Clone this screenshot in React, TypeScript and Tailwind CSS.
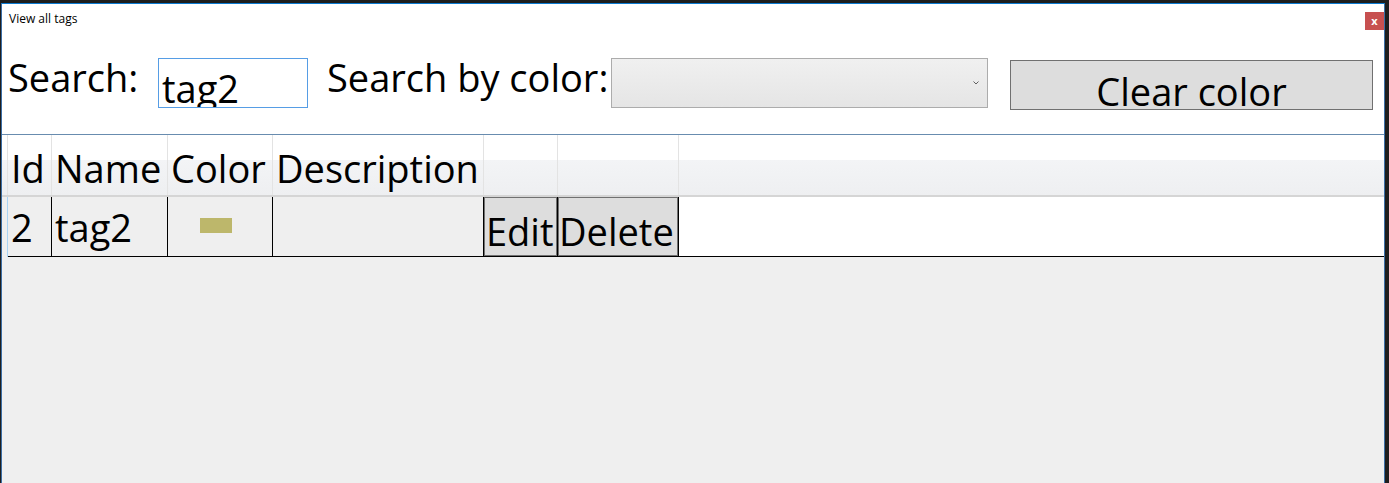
export default function App() {
  return (
    <div className="w-[1389px] h-[483px] bg-[#1e1e1e] pt-[3px] pl-[1px] overflow-hidden font-['Open_Sans',sans-serif] text-black">
      <div className="w-[1384px] h-[480px] bg-white border-t border-t-[#0b7ad1] border-x border-x-[#3b6ea5] flex flex-col">
        {/* title bar */}
        <div className="relative h-[30px] flex items-center pl-[7px] text-[12px]">
          View all tags
          <button className="absolute right-0 top-[8px] w-[19px] h-[18px] bg-[#c75050] text-white text-[11px] font-bold leading-none flex items-center justify-center pb-[2px]">
            x
          </button>
        </div>

        {/* search bar */}
        <div className="h-[100px] flex items-start text-[38px] leading-[40px]">
          <div className="ml-[6px] w-[150px] mt-[23px] whitespace-nowrap">Search:</div>
          <div className="w-[150px] h-[50px] mt-[24px] border border-[#569de5] overflow-hidden pl-[3px] pt-[9px] whitespace-nowrap">
            tag2
          </div>
          <div className="ml-[19px] w-[284px] mt-[23px] whitespace-nowrap">Search by color:</div>
          <div className="w-[377px] h-[50px] mt-[24px] border border-[#acacac] bg-gradient-to-b from-[#f0f0f0] to-[#e5e5e5] flex items-center justify-end pr-[8px]">
            <svg width="6" height="4" viewBox="0 0 6 4">
              <polyline points="0.5,0.5 3,3 5.5,0.5" fill="none" stroke="#606060" strokeWidth="1" />
            </svg>
          </div>
          <button className="ml-[22px] w-[363px] h-[50px] mt-[26px] border border-[#707070] bg-[#dddddd] pt-[10px] text-[38px] leading-[40px] flex justify-center items-start whitespace-nowrap">
            Clear color
          </button>
        </div>

        {/* data grid */}
        <div className="flex-1 flex flex-col border-t border-[#688caf] bg-[#efefef] text-[38px] leading-[40px]">
          <div className="h-[62px] flex border-b-2 border-[#d5d5d5] bg-[linear-gradient(to_bottom,#ffffff_0px,#ffffff_25px,#f3f4f6_25px,#eeeff1_100%)]">
            <div className="w-[6px] border-r border-[#e3e3e3]" />
            <div className="w-[44px] border-r border-[#e3e3e3] pl-[3px] pt-[13px]">Id</div>
            <div className="w-[116px] border-r border-[#e3e3e3] pl-[3px] pt-[13px]">Name</div>
            <div className="w-[105px] border-r border-[#e3e3e3] pl-[3px] pt-[13px]">Color</div>
            <div className="w-[211px] border-r border-[#e3e3e3] pl-[3px] pt-[13px] whitespace-nowrap">Description</div>
            <div className="w-[74px] border-r border-[#e3e3e3]" />
            <div className="w-[121px] border-r border-[#e3e3e3]" />
            <div className="flex-1" />
          </div>

          <div className="h-[60px] flex">
            <div className="w-[6px] h-[60px] border-r border-[#a9d4f5]" />
            <div className="flex-1 flex border-b border-black">
              <div className="w-[44px] border-r border-black pl-[3px] pt-[10px]">2</div>
              <div className="w-[116px] border-r border-black pl-[3px] pt-[10px]">tag2</div>
              <div className="w-[105px] border-r border-black pt-[21px] pl-[32px]">
                <div className="w-[32px] h-[15px] bg-[#bdb76b]" />
              </div>
              <div className="w-[211px] border-r border-black" />
              <div className="w-[74px] border-r border-black">
                <button className="w-full h-full border border-[#707070] bg-[#dddddd] pl-[1px] pt-[9px] text-left text-[38px] leading-[40px] whitespace-nowrap">
                  Edit
                </button>
              </div>
              <div className="w-[121px] border-r border-black">
                <button className="w-full h-full border border-[#707070] bg-[#dddddd] pt-[9px] text-left text-[38px] leading-[40px] whitespace-nowrap overflow-hidden">
                  Delete
                </button>
              </div>
              <div className="flex-1 bg-white" />
            </div>
          </div>
        </div>
      </div>
    </div>
  );
}
